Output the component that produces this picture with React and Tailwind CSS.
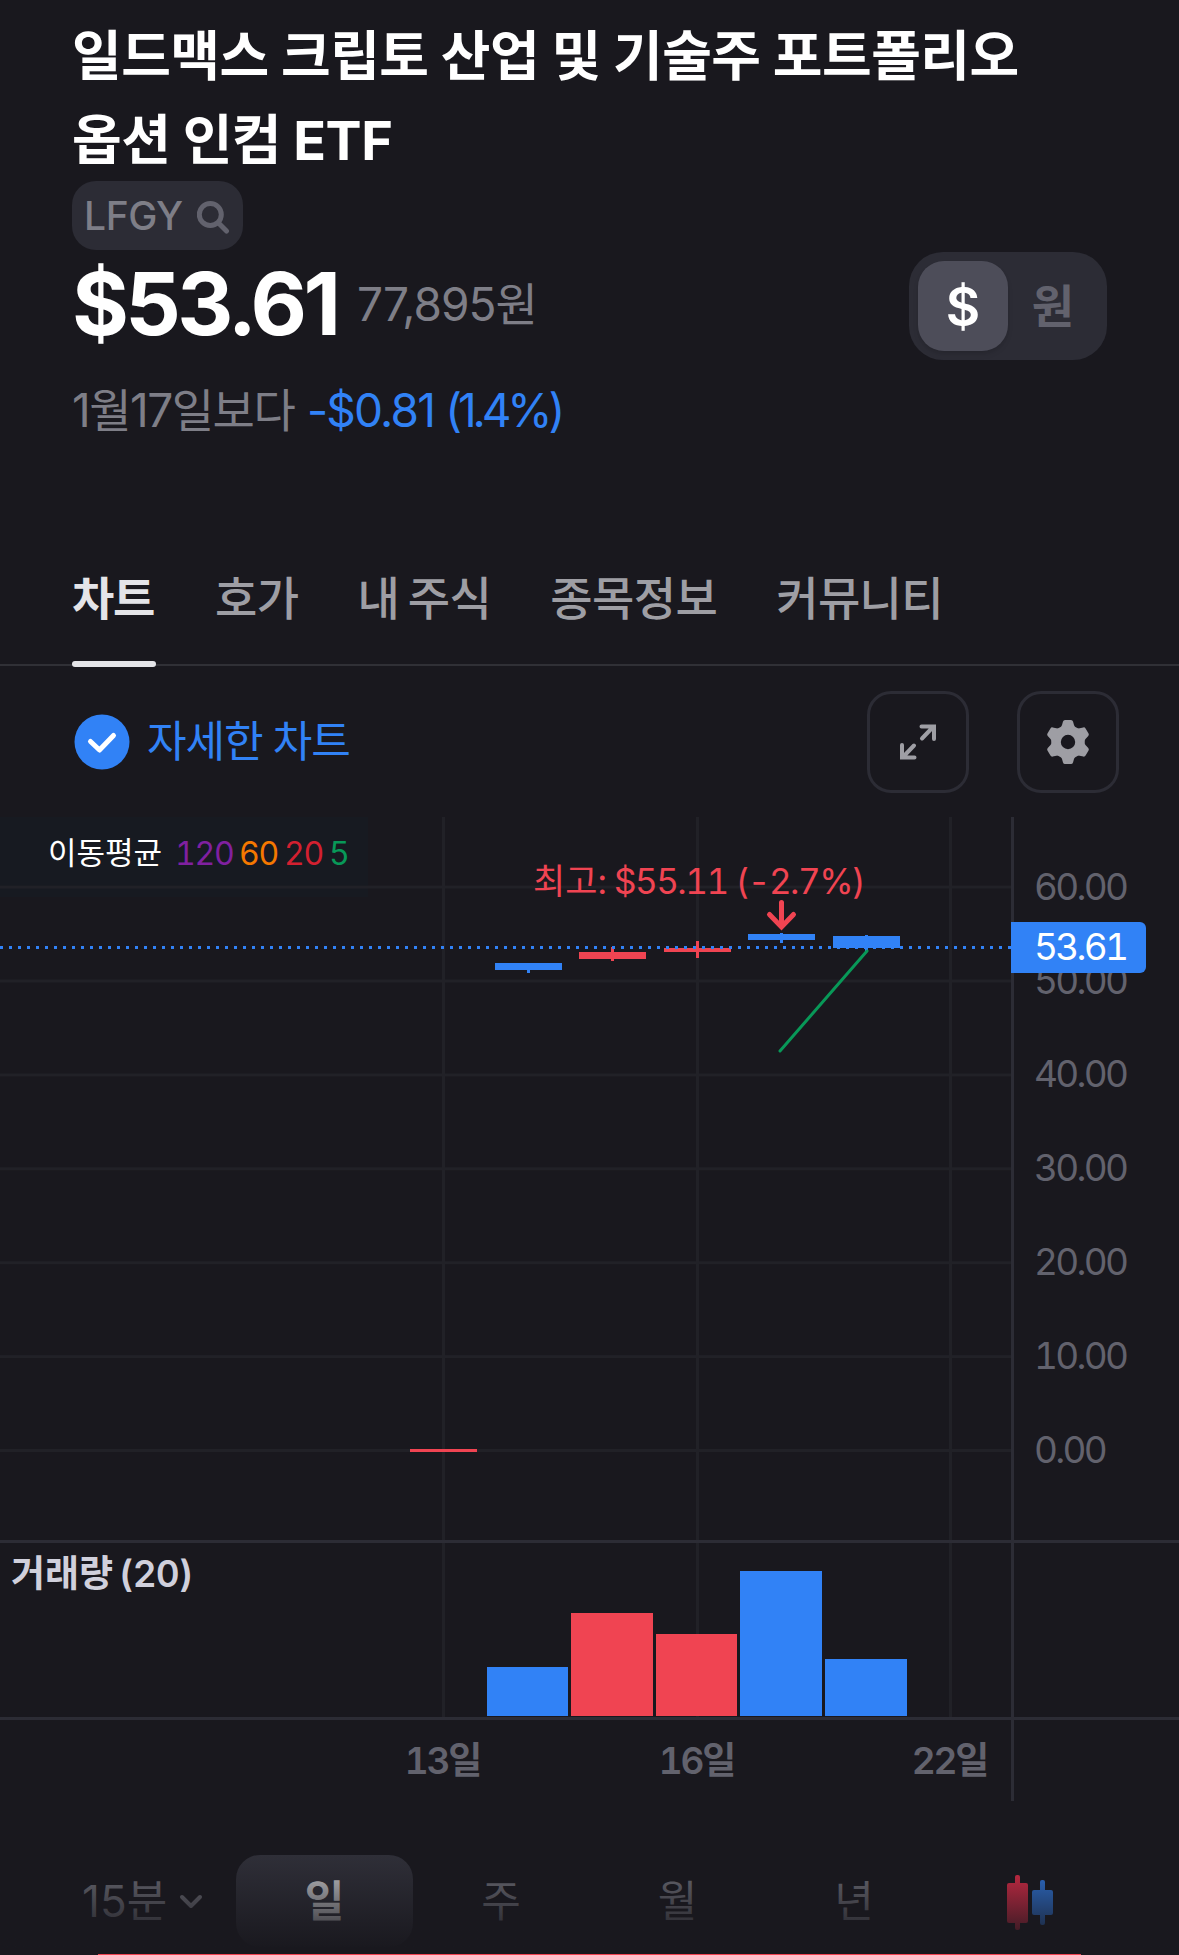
import React, { useState } from 'react';

const FONT = "font-['Inter','Noto_Sans_CJK_KR',sans-serif]";

const UP = '#f04452';
const DOWN = '#3182f6';

const tabs = ['차트', '호가', '내 주식', '종목정보', '커뮤니티'];

const prices = [60, 50, 40, 30, 20, 10, 0];

const dates = [
  { label: '13일', x: 443.5 },
  { label: '16일', x: 697.5 },
  { label: '22일', x: 950.5 },
];

// y values are relative to the top of the chart
const candles = [
  { x: 410, top: 632, bottom: 635, high: 632, low: 635, color: UP },
  { x: 495, top: 146, bottom: 153, high: 146, low: 156, color: DOWN },
  { x: 579, top: 135, bottom: 142, high: 130, low: 144, color: UP },
  { x: 664, top: 131, bottom: 135, high: 124, low: 141, color: UP },
  { x: 748, top: 117, bottom: 123, high: 116, low: 126, color: DOWN },
  { x: 833, top: 119, bottom: 131, high: 118, low: 134, color: DOWN },
];

const volumes = [
  { x: 487, width: 81, height: 49, color: DOWN },
  { x: 571, width: 82, height: 103, color: UP },
  { x: 656, width: 81, height: 82, color: UP },
  { x: 740, width: 82, height: 145, color: DOWN },
  { x: 825, width: 82, height: 57, color: DOWN },
];

const averages = [
  { label: '120', x: 175, color: '#8020a0' },
  { label: '60', x: 239, color: '#f57800' },
  { label: '20', x: 284, color: '#d32030' },
  { label: '5', x: 329, color: '#089858' },
];

const Header = () => (
  <header className="px-[72px] pt-[15px]">
    <h1 className="h-[166px] text-[54px] leading-[84px] font-bold tracking-[-0.5px] text-white whitespace-nowrap">
      일드맥스 크립토 산업 및 기술주 포트폴리오
      <br />
      옵션 인컴 ETF
    </h1>
    <div className="flex h-[69px] w-[171px] items-center rounded-3xl bg-[#2c2c35] pl-[12px]">
      <span className="w-[113px] text-[39px] leading-[69px] font-medium tracking-[-0.4px] text-[#7e7e87]">LFGY</span>
      <svg width="36" height="36" viewBox="0 0 36 36" fill="none" stroke="#62626d" strokeWidth="5">
        <circle cx="13.300" cy="16.500" r="11" />
        <path d="M21.500 25l8 8" strokeLinecap="round" />
      </svg>
    </div>
  </header>
);

const PriceSummary = () => {
  const [currency, setCurrency] = useState('$');

  return (
    <section className="flex h-[325px] justify-between px-[72px]">
      <div>
        <div className="flex h-[108px] items-center">
          <span className="w-[285px] text-[87px] leading-[104px] font-bold tracking-[-3.700px] text-white">$53.61</span>
          <span className="text-[46px] tracking-[-1px] text-[#7e7e87]">77,895원</span>
        </div>
        <p className="mt-[19px] flex text-[46px] leading-[66px] tracking-[-1.5px] whitespace-nowrap">
          <span className="w-[235px] text-[#7e7e87]">1월17일보다</span>
          <span className="tracking-[-1.8px] text-[#3182f6]">
            -$0.81 <span className="tracking-[-4.100px]">(1.4%)</span>
          </span>
        </p>
      </div>
      <div className="mt-[2px] flex h-[108px] w-[198px] items-center rounded-[34px] bg-[#2c2c35] pl-[9px] text-[46px] font-bold">
        <button
          onClick={() => setCurrency('$')}
          className="h-[90px] w-[90px] rounded-[26px] bg-[#4d4d59] pt-[3px] text-[53px] font-semibold text-white shadow-md"
        >
          $
        </button>
        <button onClick={() => setCurrency('원')} className="h-[90px] w-[90px] text-[#62626d]">
          원
        </button>
      </div>
    </section>
  );
};

const Tabs = () => (
  <nav className="flex h-[91px] gap-[59px] border-b-2 border-[#303036] pl-[72px] text-[46px] leading-[46px] font-medium tracking-[-0.6px] [word-spacing:-3px] text-[#9e9ea4]">
    {tabs.map((tab, i) => (
      <div key={tab} className={i === 0 ? 'relative w-[84px] font-bold tracking-[-1.2px] text-[#e4e4e8] whitespace-nowrap' : 'whitespace-nowrap'}>
        {tab}
        {i === 0 && <span className="absolute left-0 top-[86px] h-[6px] w-[84px] rounded-full bg-[#e4e4e8]" />}
      </div>
    ))}
  </nav>
);

const Toolbar = () => (
  <div className="flex h-[151px] items-center pl-[74px] pr-[60px]">
    <svg width="56" height="56" viewBox="0 0 56 56" fill="none">
      <circle cx="28" cy="28" r="27.500" fill="#3182f6" />
      <path d="M16.500 27.500l9 8.500 14-14.500" stroke="#fff" strokeWidth="5" strokeLinecap="round" strokeLinejoin="round" />
    </svg>
    <span className="ml-[17px] text-[43px] leading-none tracking-[-1px] [word-spacing:-1px] text-[#3182f6]">자세한 차트</span>
    <button className="ml-auto flex h-[102px] w-[102px] items-center justify-center rounded-3xl border-3 border-[#2c2c35]">
      <svg width="36" height="36" viewBox="0 0 36 36" fill="none" stroke="#9e9ea4" strokeWidth="4" strokeLinecap="round">
        <path d="M22 14.500L33 3M21.500 2.500H34V15M14 21.500L3 33M2 21v12.500h12.500" />
      </svg>
    </button>
    <button className="ml-[48px] flex h-[102px] w-[102px] items-center justify-center rounded-3xl border-3 border-[#2c2c35]">
      <svg width="46" height="46" viewBox="-23 -23 46 46" fill="#9e9ea4">
        <circle r="12" fill="none" stroke="#9e9ea4" strokeWidth="9.600" />
        {[0, 60, 120, 180, 240, 300].map((deg) => (
          <path
            key={deg}
            transform={`rotate(${deg})`}
            d="M-8 -12.500L-6 -17L-5 -20.500Q-4.500 -22 -3 -22H3Q4.500 -22 5 -20.500L6 -17L8 -12.500z"
          />
        ))}
      </svg>
    </button>
  </div>
);

const PriceChart = () => (
  <svg className="block tabular-nums" width="1179" height="984" viewBox="0 0 1179 984">
    <rect x="0" y="0" width="368" height="80" fill="#171a21" />

    {/* Grid */}
    {prices.map((price) => (
      <rect key={price} x="0" y={632 - price * 9.39} width="1012" height="3" fill="#212127" />
    ))}
    {dates.map((date) => (
      <rect key={date.label} x={date.x - 1.5} y="0" width="3" height="901" fill="#212127" />
    ))}
    <rect x="1011" y="0" width="3" height="984" fill="#2c2c35" />
    <rect x="0" y="723" width="1179" height="3" fill="#2c2c35" />
    <rect x="0" y="900" width="1179" height="3" fill="#2c2c35" />

    {/* Moving averages */}
    <text x="48" y="47" fontSize="31" fill="#fff">이동평균</text>
    {averages.map((avg) => (
      <text key={avg.label} x={avg.x} y="48" fontSize="32" letterSpacing="-1.200" fill={avg.color}>{avg.label}</text>
    ))}

    {/* Candles */}
    {candles.map((c) => (
      <g key={c.x} fill={c.color}>
        <rect x={c.x} y={c.top} width="67" height={c.bottom - c.top} />
        <rect x={c.x + 32} y={c.high} width="3" height={c.low - c.high} />
      </g>
    ))}
    <path d="M0 130.500H1012" stroke={DOWN} strokeWidth="3" strokeDasharray="3 6" />
    <path d="M780 234L867 134" stroke="#089858" strokeWidth="3" strokeLinecap="round" />

    <text x="533" y="77" fontSize="35" fill={UP}>
      최고: <tspan x="614" letterSpacing="-1.500">$55.11 (-2.7%)</tspan>
    </text>
    <path d="M781.500 85.500V109M769.500 97.500l12 12.500 12-12.500" fill="none" stroke={UP} strokeWidth="5" strokeLinecap="round" />

    {/* Price axis */}
    {prices.map((price) => (
      <text key={price} x="1034" y={646 - price * 9.39} fontSize="37" letterSpacing="-2.700" fill="#62626d">{price.toFixed(2)}</text>
    ))}
    <path d="M1011 105h129a6 6 0 0 1 6 6v39a6 6 0 0 1-6 6h-129z" fill={DOWN} />
    <text x="1034" y="143" fontSize="37" letterSpacing="-2.700" fill="#fff">53.61</text>

    {/* Volume */}
    <text x="11" y="770" fontSize="37" fontWeight="600" wordSpacing="-4" fill="#d0d0dc">
      거래량 <tspan letterSpacing="-0.800">(20)</tspan>
    </text>
    {volumes.map((v) => (
      <rect key={v.x} x={v.x} y={899 - v.height} width={v.width} height={v.height} fill={v.color} />
    ))}

    {/* Date axis */}
    {dates.map((date) => (
      <text key={date.label} x={date.x - 1} y="957" fontSize="37" fontWeight="600" letterSpacing="-2.200" textAnchor="middle" fill="#62626d">
        {date.label}
      </text>
    ))}
  </svg>
);

const PeriodBar = () => (
  <div className="relative mt-[54px] h-[100px] overflow-hidden">
    <div className="flex h-[92px] items-start text-[43px] leading-[92px] text-[#6f6f78]">
      <div className="flex w-[236px] items-center pl-[82px] text-[44px]">
        15분
        <svg className="ml-[12px]" width="24" height="16" viewBox="0 0 24 16" fill="none" stroke="#6f6f78" strokeWidth="4" strokeLinecap="round" strokeLinejoin="round">
          <path d="M3 4l9 9 9-9" />
        </svg>
      </div>
      <div className="h-[92px] w-[177px] rounded-3xl bg-[#2f2f38] text-center font-bold text-[#cdcdd0]">일</div>
      <div className="w-[176px] text-center">주</div>
      <div className="w-[177px] text-center">월</div>
      <div className="w-[176px] text-center">년</div>
      <svg className="ml-[64px] mt-[20px]" width="48" height="56" viewBox="0 0 48 56">
        <g fill="#e02c48">
          <rect x="1" y="8" width="21" height="40" rx="2" />
          <rect x="9" y="0" width="5" height="55" rx="2" />
        </g>
        <g fill="#2f78e0">
          <rect x="26" y="15" width="21" height="25" rx="2" />
          <rect x="34" y="5" width="5" height="45" rx="2" />
        </g>
      </svg>
    </div>
    {/* Fades the row out above the buy button */}
    <div className="absolute inset-0 bg-linear-to-b from-[#19181e]/0 to-[#19181e] to-95%" />
    <div className="absolute left-[98px] top-[99px] h-[70px] w-[983px] bg-[#f04452]" />
  </div>
);

const App = () => {
  return (
    <div className={`h-[1955px] w-[1179px] overflow-hidden bg-[#19181e] ${FONT}`}>
      <Header />
      <PriceSummary />
      <Tabs />
      <Toolbar />
      <PriceChart />
      <PeriodBar />
    </div>
  );
};

export default App;
